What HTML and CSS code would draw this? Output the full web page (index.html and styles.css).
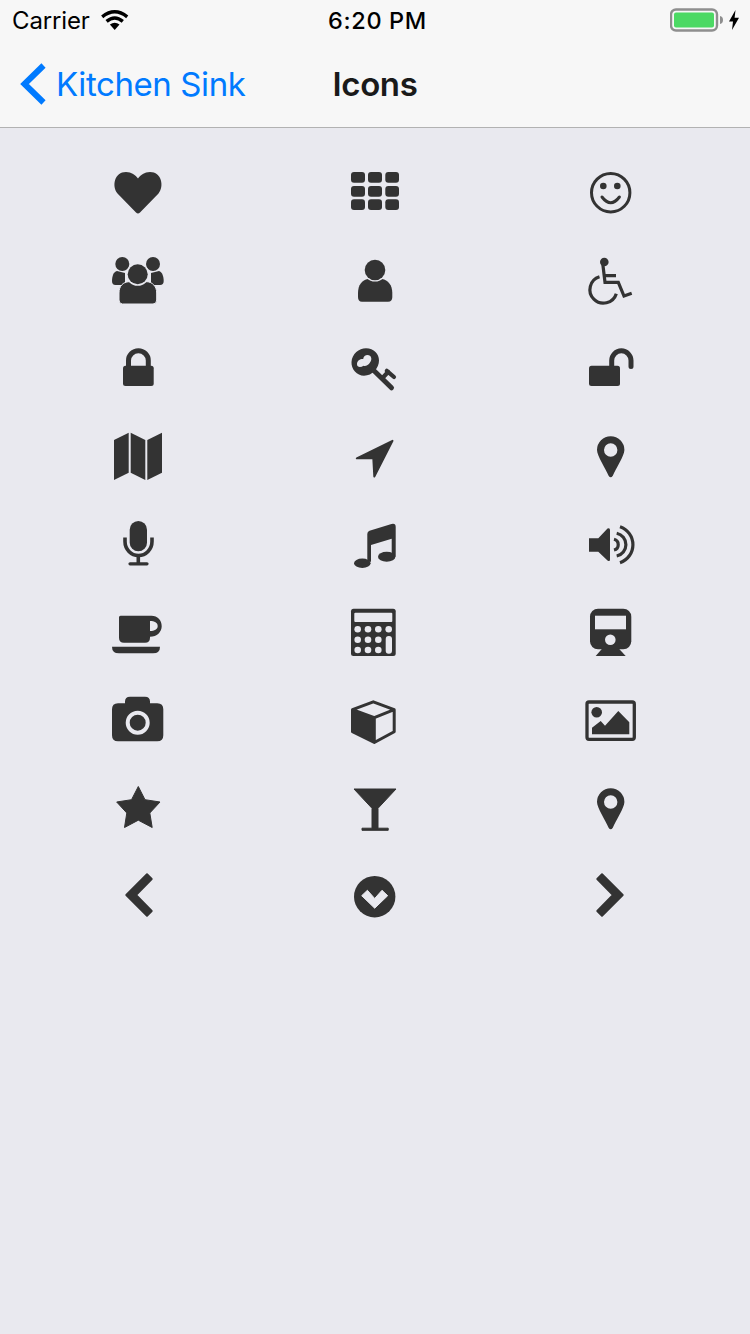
FILE: index.html
```html
<!DOCTYPE html>
<html lang="en">
<head>
<meta charset="utf-8">
<title>Icons</title>
<link rel="stylesheet" href="styles.css">
</head>
<body>
<header class="bar">
  <div class="status">
    <div class="status-left">
      <span class="carrier">Carrier</span>
      <svg class="wifi" viewBox="0 0 28 20"><path class="line w3" d="M1.2 6.8Q13.7-3.2 26.2 6.8"/><path class="line w3" d="M5.6 11.4Q13.7 4.6 21.8 11.4"/><path class="blk" d="M13.7 20L8.9 14.6Q13.7 10.8 18.5 14.6Z"/></svg>
    </div>
    <span class="time">6:20 PM</span>
    <div class="status-right">
      <svg class="battery" viewBox="0 0 54 24"><rect class="batt-frame" x="1" y="1.500" width="46" height="21" rx="5"/><rect class="batt-fill" x="4" y="4.500" width="40" height="15" rx="2"/><path class="batt-nub" d="M50 8Q53 8.500 53 12Q53 15.500 50 16Z"/></svg>
      <svg class="bolt" viewBox="0 0 10 20"><path class="blk" d="M6.500 0L0 11.500H4L3 20L10 7.700H5.600Z"/></svg>
    </div>
  </div>
  <nav class="nav">
    <div class="back">
      <svg class="chev" viewBox="0 0 26 42"><path class="chev-line" d="M23.500 2.500L4.500 21L23.500 39.500"/></svg>
      <span>Kitchen Sink</span>
    </div>
    <h1 class="title">Icons</h1>
    <div></div>
  </nav>
</header>
<main class="grid">
  <div class="cell"><svg class="ico" viewBox="-30 -30 60 60"><path d="M0 21.500Q-1 21.500-2 20.500L-20.500 1.500C-26.500-6-23.500-20-12-20C-6.500-20-2.500-17 0-13.500C2.500-17 6.500-20 12-20C23.500-20 26.500-6 20.500 1.500L2 20.500Q1 21.500 0 21.500Z"/></svg></div>
  <div class="cell"><svg class="ico" viewBox="-30 -30 60 60"><rect x="-23" y="-20" width="14" height="10.700" rx="3"/><rect x="-6" y="-20" width="14" height="10.700" rx="3"/><rect x="11.300" y="-20" width="13.700" height="10.700" rx="3"/><rect x="-23" y="-6" width="14" height="10.700" rx="3"/><rect x="-6" y="-6" width="14" height="10.700" rx="3"/><rect x="11.300" y="-6" width="13.700" height="10.700" rx="3"/><rect x="-23" y="7.300" width="14" height="10.700" rx="3"/><rect x="-6" y="7.300" width="14" height="10.700" rx="3"/><rect x="11.300" y="7.300" width="13.700" height="10.700" rx="3"/></svg></div>
  <div class="cell"><svg class="ico" viewBox="-30 -30 60 60"><circle class="line bold" cx="0.700" cy="0.700" r="19.200"/><circle cx="-6.700" cy="-6" r="3.300"/><circle cx="7.300" cy="-6" r="3.300"/><path class="line bold round" d="M-8 5Q0.700 16.500 9.400 5"/></svg></div>

  <div class="cell"><svg class="ico" viewBox="-30 -30 60 60"><path d="M-22.500 5Q-26 5-26 1C-26-4-24.500-8-21-9L-13-7L-13 5Z"/><path d="M22 5Q25.700 5 25.700 1C25.700-4 24-8 21-9L13-7L13 5Z"/><circle cx="-15.700" cy="-16" r="7"/><circle cx="15" cy="-16" r="7"/><path class="edge" d="M-15.500 24H15Q18.700 24 18.700 20V13C18.700 6 14 2 9 1.700H-9C-15 2-19 6-19 13V20Q-19 24-15.500 24Z"/><circle class="cut" cx="-0.300" cy="-5.700" r="11.500"/><circle cx="-0.300" cy="-5.700" r="10"/></svg></div>
  <div class="cell"><svg class="ico" viewBox="-30 -30 60 60"><path d="M-12 21.700H14Q18.300 21.700 18.300 17V13C18.300 5 14 0 8-1H-6C-12 0-16 5-16 13V17Q-16 21.700-12 21.700Z"/><circle class="cut" cx="1" cy="-10" r="11.500"/><circle cx="1" cy="-10" r="10.300"/></svg></div>
  <div class="cell"><svg class="ico" viewBox="-30 -30 60 60"><circle cx="-5.700" cy="-18" r="4.300"/><path class="line wheel" d="M-7.300-16.700L-5 2.300H8.300L14 16L21.700 13.300M-5-4.300H6"/><path class="line wheel" d="M-10.500-3.300A13.500 13.500 0 1 0 6.300 13.700"/></svg></div>

  <div class="cell"><svg class="ico" viewBox="-30 -30 60 60"><path class="line heavy" d="M-9.500 0V-7.500A9.900 9.700 0 0 1 10.300-7.500V0"/><rect x="-15" y="-2.300" width="30.700" height="20.300" rx="2.500"/></svg></div>
  <div class="cell"><svg class="ico" viewBox="-30 -30 60 60"><path fill-rule="evenodd" d="M-22.500-6C-22-14-15-19.700-8-19.700C0-19.700 5-14 5-7.500C5 0-1.500 7.700-10 7.700C-17 7.700-23 1-22.500-6ZM-17-3.700C-17-.5-13-.5-10.500-2.300C-8.500-1.500-5.500-3-4-5.500C-1.500-8.500-2.500-13-6.500-13C-8.700-13-10.500-11.500-10.800-9C-13.500-9.300-17-7.500-17-3.700Z"/><path class="line heavy round" d="M-.7 2L17.500 19.800"/><path class="line mid round" d="M8 10.500L14.300 3.700M12.800 2.800L20 9"/></svg></div>
  <div class="cell"><svg class="ico" viewBox="-30 -30 60 60"><path class="line heavy round" d="M1.700 0V-7.500A9.650 9.700 0 0 1 21-7.500V-1.500"/><rect x="-21" y="-2.300" width="31" height="20.300" rx="2.500"/></svg></div>

  <div class="cell"><svg class="ico" viewBox="-30 -30 60 60"><path d="M-24-16L-9.300-23.300V16.700L-24 24Z"/><path d="M-7.300-23.300L7.300-16V24L-7.300 16.700Z"/><path d="M9.300-16L24-23.300V16.700L9.300 24Z"/></svg></div>
  <div class="cell"><svg class="ico" viewBox="-30 -30 60 60"><path class="soft" d="M18.500-15.200L-17.200 2.300H-0.700L0.300 20.500Z"/></svg></div>
  <div class="cell"><svg class="ico" viewBox="-30 -30 60 60"><path fill-rule="evenodd" d="M-13-6A13.700 13.700 0 0 1 14.400-6C14.400 0 5.500 13 2.800 19.800Q.7 22.800-1.400 19.800C-4.100 13-13 0-13-6ZM-6-6A6.700 6.700 0 0 0 7.400-6A6.700 6.700 0 0 0-6-6Z"/></svg></div>

  <div class="cell"><svg class="ico" viewBox="-30 -30 60 60"><rect x="-8.300" y="-23" width="17.300" height="30.300" rx="8.650"/><path class="line heavy-m" d="M-13-6.500V-2.500A13.500 14 0 0 0 14-2.500V-6.500"/><path class="line heavy-m" d="M.3 12V19"/><path class="line mic-base round" d="M-8 19.800H9"/></svg></div>
  <div class="cell"><svg class="ico" viewBox="-30 -30 60 60"><path d="M-6.700 17.700V-10Q-6.700-12.500-4.500-13.300L17.500-20Q21.700-21 21.700-17V12.700H17.700V-5.300L-3 1V17.700Z"/><ellipse cx="-11.700" cy="19.300" rx="8.300" ry="4.700"/><ellipse cx="12.700" cy="12.700" rx="8.700" ry="5"/></svg></div>
  <div class="cell"><svg class="ico" viewBox="-30 -30 60 60"><path d="M-21-5.700H-11.700L-2.500-15.500Q0-16.500 0-14V15.500Q0 18-2.500 16.500L-11.700 7.700H-21Z"/><path class="line wheel" d="M4-4.700A5.500 5.500 0 0 1 4 6"/><path class="line wheel" d="M6.700-10.700A11.600 11.600 0 0 1 6.700 12"/><path class="line wheel" d="M10-17.300A19 19 0 0 1 10 18.700"/></svg></div>

  <div class="cell"><svg class="ico" viewBox="-30 -30 60 60"><path fill-rule="evenodd" d="M-19-14.800Q-19-16.300-17.500-16.300H13.500C19.500-16.300 23.700-12 23.700-5.800C23.700 0 19 4.700 12 4.700V5.700Q12 10.700 7 10.700H-14Q-19 10.700-19 5.700ZM12-11V-1C16.500-1 19.700-2.500 19.700-6C19.700-9.500 16.500-11 12-11Z"/><path d="M-26 14.700H22Q22 21.300 15 21.300H-19Q-26 21.300-26 14.700Z"/></svg></div>
  <div class="cell"><svg class="ico" viewBox="-30 -30 60 60"><rect x="-23" y="-23.300" width="44.700" height="47.300" rx="2.500"/><g class="cut"><rect x="-19.700" y="-19.300" width="38" height="9.300" rx="1"/><circle cx="-16.300" cy="-2.700" r="3.300"/><circle cx="-6" cy="-2.700" r="3.300"/><circle cx="4.300" cy="-2.700" r="3.300"/><circle cx="14.700" cy="-2.700" r="3.300"/><circle cx="-16.300" cy="7.700" r="3.300"/><circle cx="-6" cy="7.700" r="3.300"/><circle cx="4.300" cy="7.700" r="3.300"/><circle cx="-16.300" cy="18" r="3.300"/><circle cx="-6" cy="18" r="3.300"/><circle cx="4.300" cy="18" r="3.300"/><rect x="11.700" y="4" width="6.300" height="17.700" rx="3"/></g></svg></div>
  <div class="cell"><svg class="ico" viewBox="-30 -30 60 60"><rect x="-20" y="-23.300" width="41.300" height="40.600" rx="8"/><path d="M-7.300 16H8.300L15.700 24H-14.300Z"/><rect class="cut" x="-15" y="-16.300" width="31" height="13.600"/><circle class="cut" cx="0.300" cy="7.700" r="5.300"/></svg></div>

  <div class="cell"><svg class="ico" viewBox="-30 -30 60 60"><path d="M-13-16.700V-18.500Q-13-23.300-8-23.300H7Q12-23.300 12-18.500V-16.700H19.300Q25.300-16.700 25.300-10.700V15.300Q25.300 21.300 19.300 21.300H-20Q-26 21.300-26 15.300V-10.700Q-26-16.700-20-16.700Z"/><circle class="ring" cx="-0.300" cy="2.700" r="10"/></svg></div>
  <div class="cell"><svg class="ico" viewBox="-30 -30 60 60"><path d="M-21.500-10.300L0.300-2.300V23L-21.500 11.700Z"/><path class="line thick-j" d="M-0.700-18.200L20.200-10.300V11.700L0.300 22.500L-21.500 11.700V-10.300ZM-21.500-10.300L0.300-2.300L20.200-10.300M0.300-2.300V22.500"/></svg></div>
  <div class="cell"><svg class="ico" viewBox="-30 -30 60 60"><rect class="line frame" x="-23" y="-18" width="47.300" height="37.300" rx="2"/><circle cx="-13.300" cy="-7.700" r="5.300"/><path d="M-18 14.300V7.700L-9.300 1L-5 5.700L8.300-9L19.300 2.300V14.300Z"/></svg></div>

  <div class="cell"><svg class="ico" viewBox="-30 -30 60 60"><path class="soft-s" d="M0.300-21.500L7-8.300L22-6L11.800 5L14.200 19.500L0.300 12.200L-13.500 19.500L-11.200 5L-21.300-6L-6.500-8.300Z"/></svg></div>
  <div class="cell"><svg class="ico" viewBox="-30 -30 60 60"><path class="soft-s" d="M-20-19H22L4 0.300V20.200H14.200V22.300H-12V20.200H-2V0.300Z"/></svg></div>
  <div class="cell"><svg class="ico" viewBox="-30 -30 60 60"><path fill-rule="evenodd" d="M-13-6A13.700 13.700 0 0 1 14.400-6C14.400 0 5.500 13 2.800 19.800Q.7 22.800-1.400 19.800C-4.100 13-13 0-13-6ZM-6-6A6.700 6.700 0 0 0 7.400-6A6.700 6.700 0 0 0-6-6Z"/></svg></div>

  <div class="cell"><svg class="ico" viewBox="-30 -30 60 60"><path class="soft-c" d="M-11.700-1L9-21.700L13.700-17L-2-1L13.700 15L9 19.700Z"/></svg></div>
  <div class="cell"><svg class="ico" viewBox="-30 -30 60 60"><circle cx="0.700" cy="0.700" r="20.700"/><path class="cut soft-w" d="M0.700 12.200L-12.300-0.300L-6.600-5.700L0.700 2.500L8-5.700L13.700-0.300Z"/></svg></div>
  <div class="cell"><svg class="ico" viewBox="-30 -30 60 60"><path class="soft-c" d="M12.700-1L-8-21.700L-12.700-17L3-1L-12.700 15L-8 19.700Z"/></svg></div>
</main>
</body>
</html>
```

FILE: styles.css
```css
html, body {
  margin: 0;
  padding: 0;
}

body {
  width: 750px;
  height: 1334px;
  overflow: hidden;
  background: #e9e9ef;
  font-family: Inter, "Liberation Sans", sans-serif;
}

.bar {
  background: #f7f7f7;
  border-bottom: 1px solid #b2b2b2;
}

.status {
  height: 40px;
  display: grid;
  grid-template-columns: 1fr auto 1fr;
  align-items: center;
  color: #000;
  font-size: 24px;
  line-height: 38px;
  padding: 0 7px 0 12px;
}

.status-left {
  display: flex;
  align-items: center;
  gap: 11px;
}

.carrier {
  font-weight: 400;
  letter-spacing: -0.15px;
  padding-top: 2px;
}

.wifi {
  width: 28px;
  height: 20px;
}

.time {
  font-weight: 500;
  font-size: 23.5px;
  letter-spacing: 0.65px;
  padding-top: 2px;
}

.status-right {
  display: flex;
  justify-content: flex-end;
  align-items: center;
  gap: 5px;
  padding-right: 4px;
}

.battery {
  width: 54px;
  height: 24px;
}

.bolt {
  width: 10px;
  height: 20px;
}

.batt-frame {
  fill: none;
  stroke: #8e8e8e;
  stroke-width: 2.4;
}

.batt-fill {
  fill: #4cd964;
}

.batt-nub {
  fill: #8e8e8e;
}

.blk {
  fill: #000;
}

.line.w3 {
  stroke: #000;
  stroke-width: 3.4;
}

.nav {
  height: 87px;
  display: grid;
  grid-template-columns: 1fr auto 1fr;
  align-items: center;
  padding: 0 20px;
}

.back {
  display: flex;
  align-items: center;
  gap: 10px;
  color: #007aff;
  font-size: 33px;
  letter-spacing: -0.4px;
}

.chev {
  width: 26px;
  height: 42px;
  flex: none;
}

.chev-line {
  fill: none;
  stroke: #007aff;
  stroke-width: 6;
}

.title {
  margin: 0;
  font-size: 33px;
  font-weight: 600;
  letter-spacing: -0.4px;
  color: #1a1a1a;
}

.grid {
  display: grid;
  grid-template-columns: repeat(3, 236px);
  grid-auto-rows: 88px;
  padding: 20px 0 0 20px;
}

.cell {
  display: flex;
  align-items: center;
  justify-content: center;
}

.ico {
  width: 60px;
  height: 60px;
  fill: #333;
}

.cut {
  fill: #e9e9ef;
}

.edge {
  stroke: #e9e9ef;
  stroke-width: 1;
}

.line {
  fill: none;
  stroke: #333;
  stroke-width: 2.7;
}

.round {
  stroke-linecap: round;
}

.bold {
  stroke-width: 3;
}

.wheel {
  stroke-width: 3.2;
}

.heavy {
  stroke-width: 5;
}

.heavy-m {
  stroke-width: 3.6;
}

.mic-base {
  stroke-width: 3.2;
}

.mid {
  stroke-width: 4.2;
}

.frame {
  stroke-width: 3.3;
}

.thick-j {
  stroke-width: 3;
  stroke-linejoin: round;
}

.ring {
  fill: none;
  stroke: #e9e9ef;
  stroke-width: 4;
}

.soft {
  stroke: #333;
  stroke-width: 2;
  stroke-linejoin: round;
}

.soft-s {
  stroke: #333;
  stroke-width: 1;
  stroke-linejoin: round;
}

.soft-c {
  stroke: #333;
  stroke-width: 2;
  stroke-linejoin: round;
}

.soft-w {
  stroke: #e9e9ef;
  stroke-width: 1;
  stroke-linejoin: round;
}
```
